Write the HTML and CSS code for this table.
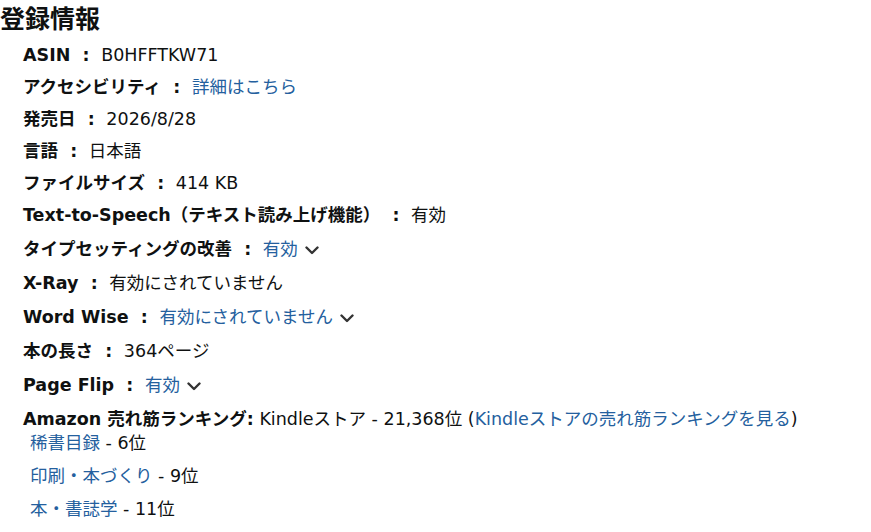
FILE: index.html
```html
<!DOCTYPE html>
<html lang="ja">
<head>
<meta charset="utf-8">
<link rel="stylesheet" href="styles.css">
</head>
<body>
<div class="details">
  <h2 class="title">登録情報</h2>
  <ul class="list">
    <li class="row"><span class="label">ASIN&nbsp; :&nbsp;</span> <span>B0HFFTKW71</span></li>
    <li class="row"><span class="label">アクセシビリティ&nbsp; :&nbsp;</span> <a class="link" href="#">詳細はこちら</a></li>
    <li class="row"><span class="label">発売日&nbsp; :&nbsp;</span> <span>2026/8/28</span></li>
    <li class="row"><span class="label">言語&nbsp; :&nbsp;</span> <span>日本語</span></li>
    <li class="row"><span class="label">ファイルサイズ&nbsp; :&nbsp;</span> <span>414 KB</span></li>
    <li class="row row-tall"><span class="label">Text-to-Speech（テキスト読み上げ機能）&nbsp; :&nbsp;</span> <span>有効</span></li>
    <li class="row row-tall"><span class="label">タイプセッティングの改善&nbsp; :&nbsp;</span> <a class="link" href="#">有効</a><svg class="chev" viewBox="0 0 14 9" width="14" height="9"><path d="M1.5 1.5 L7 7 L12.5 1.5" fill="none" stroke="#333" stroke-width="2.4" stroke-linecap="round" stroke-linejoin="round"/></svg></li>
    <li class="row row-tall"><span class="label">X-Ray&nbsp; :&nbsp;</span> <span>有効にされていません</span></li>
    <li class="row row-tall"><span class="label">Word Wise&nbsp; :&nbsp;</span> <a class="link" href="#">有効にされていません</a><svg class="chev" viewBox="0 0 14 9" width="14" height="9"><path d="M1.5 1.5 L7 7 L12.5 1.5" fill="none" stroke="#333" stroke-width="2.4" stroke-linecap="round" stroke-linejoin="round"/></svg></li>
    <li class="row row-tall"><span class="label">本の長さ&nbsp; :&nbsp;</span> <span>364ページ</span></li>
    <li class="row row-tall"><span class="label">Page Flip&nbsp; :&nbsp;</span> <a class="link" href="#">有効</a><svg class="chev" viewBox="0 0 14 9" width="14" height="9"><path d="M1.5 1.5 L7 7 L12.5 1.5" fill="none" stroke="#333" stroke-width="2.4" stroke-linecap="round" stroke-linejoin="round"/></svg></li>
    <li class="row rank"><span class="label">Amazon 売れ筋ランキング:</span> Kindleストア - 21,368位 (<a class="link" href="#">Kindleストアの売れ筋ランキングを見る</a>)
      <ul class="sublist">
        <li class="subrow"><a class="link" href="#">稀書目録</a> - 6位</li>
        <li class="subrow"><a class="link" href="#">印刷・本づくり</a> - 9位</li>
        <li class="subrow"><a class="link" href="#">本・書誌学</a> - 11位</li>
      </ul>
    </li>
  </ul>
</div>
</body>
</html>
```
FILE: styles.css
```css
html, body {
  margin: 0;
  padding: 0;
  background: #ffffff;
}
body {
  font-family: "DejaVu Sans", "Noto Sans CJK JP", sans-serif;
  font-size: 17.5px;
  color: #0f1111;
}
.details {
  padding-top: 2px;
}
.title {
  margin: 0 0 11px 0;
  font-family: "Noto Sans CJK JP", sans-serif;
  font-size: 25px;
  line-height: 30px;
  font-weight: 700;
}
.list {
  list-style: none;
  margin: 0;
  padding: 0 0 0 23px;
}
.row {
  line-height: 24px;
  margin-bottom: 8px;
  white-space: nowrap;
}
.row-tall {
  margin-bottom: 10px;
}
.rank {
  margin-bottom: 0;
}
.label {
  font-weight: 700;
}
.link {
  color: #24609e;
  text-decoration: none;
}
.chev {
  margin-left: 7px;
  vertical-align: 0px;
}
.sublist {
  list-style: none;
  margin: 0;
  padding: 0 0 0 7px;
}
.subrow {
  line-height: 24px;
  margin-bottom: 9px;
}
```
